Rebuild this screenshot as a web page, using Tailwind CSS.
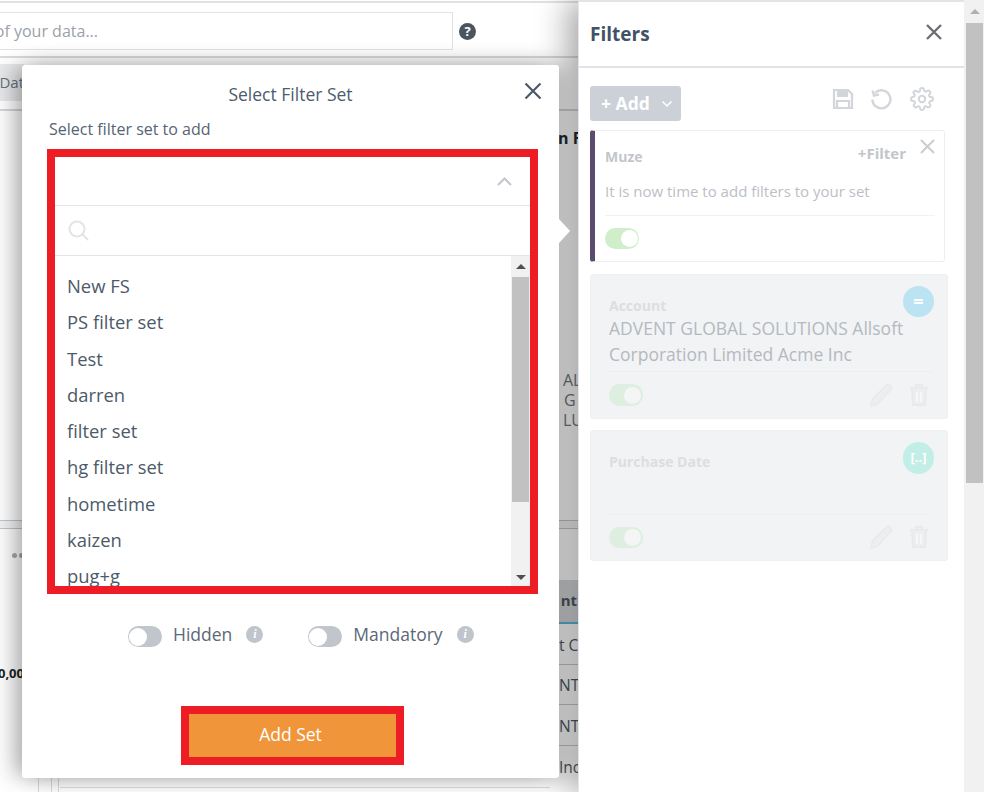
<!DOCTYPE html>
<html lang="en">
<head>
    <meta charset="UTF-8">
    <title>Select Filter Set</title>
    <script src="https://cdn.jsdelivr.net/npm/@tailwindcss/browser@4"></script>
</head>
<body class="bg-white">
<div class="relative w-[984px] h-[792px] overflow-hidden flex font-['Open_Sans',sans-serif] text-[#4a5a6c]">

    <!-- Page behind the modal -->
    <div class="relative w-[578px] shrink-0 flex flex-col pt-[1px]">
        <div class="h-[57px] shrink-0 border-t-2 border-b-2 border-t-[#dfe1e4] border-b-[#d8dadd] flex items-start">
            <div class="w-[453px] h-[38px] mt-[9px] border border-l-0 border-[#e0e2e5] flex items-center text-[16px] text-[#9aa1a9] whitespace-nowrap overflow-hidden justify-end pr-[354px]">of your data...</div>
            <div class="w-[17px] h-[17px] mt-[20px] ml-[6px] rounded-full bg-[#4a5560] text-white text-[13px] font-bold flex items-center justify-center">?</div>
        </div>
        <div class="h-[53px] shrink-0 border-b-2 border-[#d4d6d9] pt-[6px]">
            <div class="w-[24px] h-[37px] bg-[#e8e9eb] overflow-hidden flex items-center justify-end text-[15px] text-[#68727d] whitespace-nowrap">Dat</div>
        </div>
        <div class="flex justify-end h-[409px] shrink-0 pt-[16px] text-[16px] font-bold text-[#222b33] leading-[22px] overflow-hidden whitespace-nowrap">
            <div class="w-[20px]">
                <div>n F</div>
                <div class="mt-[221px] text-[16px] leading-[20px] font-normal text-[#73787d] pl-[5px]">
                    <div>AL</div>
                    <div class="pl-[1px]">G</div>
                    <div>LU</div>
                </div>
            </div>
        </div>
        <div class="h-[60px] shrink-0">
            <div class="h-[9px] bg-[#f3f4f5] border-y border-[#c4c6c9]"></div>
            <span class="ml-[12px] mt-[24px] w-[12px] h-[5px] flex gap-[2px]"><i class="w-[5px] h-[5px] rounded-full bg-[#a6abb1]"></i><i class="w-[5px] h-[5px] rounded-full bg-[#a6abb1]"></i></span>
        </div>
        <div class="flex-1 flex justify-between overflow-hidden">
            <div class="pt-[84px] text-[13px] font-bold text-[#222] w-[24px] whitespace-nowrap overflow-hidden flex justify-end">0,00</div>
            <div class="w-[19px] text-[15.5px] text-[#4f5964] whitespace-nowrap overflow-hidden">
                <div class="h-[44px] bg-[#d5d7da] border-b-2 border-[#5db8d8] flex items-center font-bold text-[15px] justify-end pr-[1px] pb-[2px]">nt</div>
                <div class="h-[41px] border-b border-[#c8cacd] flex items-center pt-[3px]">t C</div>
                <div class="h-[40px] border-b border-[#c8cacd] flex items-center pt-[3px]">NT</div>
                <div class="h-[41px] border-b border-[#c8cacd] flex items-center pt-[3px]">NT</div>
                <div class="h-[40px] flex items-center pt-[3px]">Inc</div>
            </div>
        </div>
        <!-- bits of the page showing under the modal -->
        <div class="absolute left-[38px] top-[778px] w-[21px] h-[14px] border-x border-[#d8dadd]"><div class="ml-[12px] w-[1px] h-full bg-[#d8dadd]"></div></div>
        <div class="absolute left-[60px] top-[787px] w-[490px] h-[1px] bg-[#dcdee1]"></div>
    </div>

    <!-- Filters panel -->
    <div class="relative z-10 w-[386px] shrink-0 bg-white shadow-[-10px_0_30px_rgba(0,0,0,0.35)] flex flex-col border-t-2 border-l border-t-[#e2e4e6] border-l-[#e4e4ea] h-[792px]">
        <div class="h-[66px] shrink-0 border-b-2 border-[#e1e3e6] flex items-start justify-between pl-[11px] pr-[20px]">
            <h2 class="mt-[18px] text-[19px] leading-[28px] font-bold text-[#3f5268]">Filters</h2>
            <svg class="mt-[20px]" width="20" height="20" viewBox="0 0 20 20" fill="none" stroke="#6b6f74" stroke-width="2.4"><path d="M3 3l14 14M17 3L3 17"/></svg>
        </div>
        <div class="flex items-start justify-between pl-[11px] pr-[30px] pt-[18px]">
            <div class="w-[91px] h-[35px] rounded-[3px] bg-[#ccd1d8] text-white font-bold text-[17.5px] flex items-center pl-[11px] gap-[11px]">
                <span>+ Add</span>
                <svg width="12" height="8" viewBox="0 0 12 8" fill="none" stroke="#fff" stroke-width="1.5"><path d="M1.5 1.5L6 6l4.5-4.5"/></svg>
            </div>
            <div class="flex items-center mt-[1px] text-[#d2d6db]">
                <svg width="22" height="22" viewBox="0 0 22 22" fill="none" stroke="currentColor" stroke-width="2.2"><path d="M2 2h14l4 4v14H2z"/><path d="M6 2h9v6H6z" fill="currentColor"/><path d="M5 20v-7h12v7"/></svg>
                <svg class="ml-[16px]" width="22" height="22" viewBox="0 0 22 22" fill="none" stroke="currentColor" stroke-width="2.4"><path d="M5 5a9 9 0 1 1-2.600 6.500"/><path d="M2.500 2.500L4 7.500l5-1"/></svg>
                <svg class="ml-[18px]" width="24" height="24" viewBox="0 0 24 24" fill="none" stroke="currentColor" stroke-width="2"><circle cx="12" cy="12" r="3.200"/><path d="M19.400 15a1.650 1.650 0 0 0 .33 1.820l.06.06a2 2 0 1 1-2.830 2.830l-.06-.06a1.650 1.650 0 0 0-2.820 1.170V21a2 2 0 1 1-4 0v-.09a1.650 1.650 0 0 0-2.820-1.170l-.06.06a2 2 0 1 1-2.830-2.830l.06-.06A1.650 1.650 0 0 0 3.090 14H3a2 2 0 1 1 0-4h.09a1.650 1.650 0 0 0 1.170-2.820l-.06-.06a2 2 0 1 1 2.830-2.830l.06.06A1.650 1.650 0 0 0 10 3.090V3a2 2 0 1 1 4 0v.09a1.650 1.650 0 0 0 2.820 1.170l.06-.06a2 2 0 1 1 2.830 2.830l-.06.06A1.650 1.650 0 0 0 20.910 10H21a2 2 0 1 1 0 4h-.09a1.650 1.650 0 0 0-1.510 1z"/></svg>
            </div>
        </div>

        <div class="flex flex-col pl-[11px] mt-[9px]">
            <!-- Muze set -->
            <div class="relative w-[355px] h-[132px] border border-[#eceef0] border-l-[5px] border-l-[#5b4b6f] rounded-[3px] pl-[10px] pr-[9px]">
                <div class="flex justify-between items-start">
                    <span class="mt-[15px] text-[14px] font-bold text-[#c2c6cb]">Muze</span>
                    <span class="mt-[11px] mr-[29px] text-[15px] font-bold text-[#c2c6cb]">+Filter</span>
                </div>
                <svg class="absolute right-[9px] top-[8px]" width="15" height="15" viewBox="0 0 15 15" fill="none" stroke="#c9cdd2" stroke-width="2"><path d="M1 1l13 13M14 1L1 14"/></svg>
                <p class="mt-[13px] h-[36px] text-[15px] text-[#bcc0c6] border-b border-[#f1f2f4]">It is now time to add filters to your set</p>
                <div class="mt-[12px] w-[34px] h-[21px] rounded-full bg-[#cfeec9] flex justify-end items-center pr-[1px]"><div class="w-[17px] h-[17px] rounded-full bg-white"></div></div>
            </div>

            <!-- Account filter -->
            <div class="relative w-[358px] h-[145px] mt-[12px] bg-[#f1f3f5] border border-[#eef0f2] rounded-[3px] pl-[18px] pr-[18px]">
                <div class="absolute right-[13px] top-[11px] w-[31px] h-[31px] rounded-full bg-[#bce3f2] text-white font-bold text-[18px] flex items-center justify-center">=</div>
                <div class="pt-[21px] text-[14px] leading-[19px] font-bold text-[#dcdee1]">Account</div>
                <p class="text-[17.5px] leading-[25.5px] text-[#b5b9bf] mt-[1px] h-[56px] border-b border-[#eceef0] -mr-[3px]">ADVENT GLOBAL SOLUTIONS Allsoft Corporation Limited Acme Inc</p>
                <div class="flex justify-between items-center mt-[11px]">
                    <div class="w-[34px] h-[22px] rounded-full bg-[#deeee0] flex justify-end items-center pr-[2px]"><div class="w-[17px] h-[17px] rounded-full bg-[#f4f6f6]"></div></div>
                    <div class="flex items-center gap-[16px]">
                        <svg width="24" height="24" viewBox="0 0 24 24" fill="#eceef0" stroke="#e8eaec" stroke-width="1.600"><path d="M2 23l1.500-7L17 2.500a2.500 2.500 0 0 1 4.500 4.500L8.500 21z"/></svg>
                        <svg width="20" height="22" viewBox="0 0 20 22" fill="#eceef0" stroke="#e8eaec" stroke-width="2"><path d="M1 4h18M7 4V1h6v3M3 4l1 17h12l1-17z"/><path d="M8 8v10M12 8v10" stroke="#f6f7f8"/></svg>
                    </div>
                </div>
            </div>

            <!-- Purchase Date filter -->
            <div class="relative w-[358px] h-[131px] mt-[11px] bg-[#f1f3f5] border border-[#eef0f2] rounded-[3px] pl-[18px] pr-[18px]">
                <div class="absolute right-[13px] top-[11px] w-[31px] h-[32px] rounded-full bg-[#c3eee8] text-white font-bold text-[13px] flex items-center justify-center">[..]</div>
                <div class="pt-[21px] h-[84px] text-[14px] leading-[19px] font-bold text-[#dcdee1] border-b border-[#eceef0]">Purchase Date</div>
                <div class="flex justify-between items-center mt-[10px]">
                    <div class="w-[34px] h-[21px] rounded-full bg-[#deeee0] flex justify-end items-center pr-[2px]"><div class="w-[17px] h-[17px] rounded-full bg-[#f4f6f6]"></div></div>
                    <div class="flex items-center gap-[16px]">
                        <svg width="24" height="24" viewBox="0 0 24 24" fill="#eceef0" stroke="#e8eaec" stroke-width="1.600"><path d="M2 23l1.500-7L17 2.500a2.500 2.500 0 0 1 4.500 4.500L8.500 21z"/></svg>
                        <svg width="20" height="22" viewBox="0 0 20 22" fill="#eceef0" stroke="#e8eaec" stroke-width="2"><path d="M1 4h18M7 4V1h6v3M3 4l1 17h12l1-17z"/><path d="M8 8v10M12 8v10" stroke="#f6f7f8"/></svg>
                    </div>
                </div>
            </div>
        </div>
    </div>

    <!-- Window scrollbar -->
    <div class="relative z-20 w-[20px] shrink-0 bg-[#f1f1f1] pl-[2px] pr-[1px]">
        <div class="h-[23px] flex items-center justify-center"><div class="w-0 h-0 border-x-[5px] border-x-transparent border-b-[5px] border-b-[#b0b0b0]"></div></div>
        <div class="h-[460px] bg-[#c1c1c1]"></div>
    </div>

    <!-- Select Filter Set modal -->
    <div class="absolute z-30 left-[22px] top-[65px] w-[537px] h-[713px] bg-white rounded-[3px] shadow-[-10px_0_22px_-2px_rgba(0,0,0,0.3),10px_0_22px_rgba(0,0,0,0.18)] [clip-path:inset(-30px_-19px_-30px_-30px)]">
        <div class="absolute right-[-11px] top-[154px] w-0 h-0 border-y-[12px] border-y-transparent border-l-[11px] border-l-white"></div>
        <svg class="absolute right-[17px] top-[17px]" width="18" height="18" viewBox="0 0 18 18" fill="none" stroke="#4b5a6b" stroke-width="2.200"><path d="M1.500 1.500l15 15M16.500 1.500l-15 15"/></svg>
        <h3 class="pt-[17px] text-center text-[17.5px] leading-[24px] text-[#4d5c6d]">Select Filter Set</h3>
        <p class="ml-[27px] mt-[12px] text-[16px] leading-[22px] text-[#566475]">Select filter set to add</p>

        <div class="ml-[25px] mt-[9px] w-[491px] h-[445px] border-[8px] border-[#ee1c25] flex flex-col">
            <div class="h-[49px] shrink-0 border-b border-[#e2e4e7] flex items-center justify-end pr-[18px]">
                <svg width="15" height="9" viewBox="0 0 15 9" fill="none" stroke="#c3c7cc" stroke-width="2"><path d="M1 8l6.500-6.500L14 8"/></svg>
            </div>
            <div class="h-[50px] shrink-0 border-b border-[#e2e4e7] flex items-center pl-[13px]">
                <svg width="21" height="21" viewBox="0 0 21 21" fill="none" stroke="#e3e4e6" stroke-width="2"><circle cx="9" cy="9" r="7.500"/><path d="M14.500 14.500L20 20"/></svg>
            </div>
            <div class="flex-1 flex overflow-hidden">
                <ul class="flex-1 pl-[12px] pt-[12px] text-[18.4px] leading-[36.250px] text-[#4c5a69]">
                    <li>New FS</li>
                    <li>PS filter set</li>
                    <li>Test</li>
                    <li>darren</li>
                    <li>filter set</li>
                    <li>hg filter set</li>
                    <li>hometime</li>
                    <li>kaizen</li>
                    <li>pug+g</li>
                </ul>
                <div class="w-[19px] shrink-0 bg-[#f1f1f1] flex flex-col items-center">
                    <div class="h-[21px] shrink-0 flex items-center justify-center"><div class="w-0 h-0 border-x-[5px] border-x-transparent border-b-[5px] border-b-[#505050]"></div></div>
                    <div class="w-[17px] h-[225px] bg-[#c1c1c1]"></div>
                    <div class="flex-1 flex items-end pb-[6px]"><div class="w-0 h-0 border-x-[5px] border-x-transparent border-t-[5px] border-t-[#505050]"></div></div>
                </div>
            </div>
        </div>

        <div class="flex items-center mt-[32px] ml-[106px] h-[21px] text-[17.5px] text-[#5b6877]">
            <div class="w-[34px] h-[21px] rounded-full bg-[#c1c6cc] flex items-center pl-[1px]"><div class="w-[18px] h-[18px] rounded-full bg-white"></div></div>
            <span class="ml-[11px] -mt-[4px]">Hidden</span>
            <div class="ml-[14px] -mt-[5px] w-[17px] h-[17px] rounded-full bg-[#bfc5cc] text-white text-[12px] font-bold italic font-['Liberation_Serif',serif] flex items-center justify-center">i</div>
            <div class="ml-[45px] w-[34px] h-[21px] rounded-full bg-[#c1c6cc] flex items-center pl-[1px]"><div class="w-[18px] h-[18px] rounded-full bg-white"></div></div>
            <span class="ml-[11px] -mt-[4px]">Mandatory</span>
            <div class="ml-[14px] -mt-[5px] w-[17px] h-[17px] rounded-full bg-[#bfc5cc] text-white text-[12px] font-bold italic font-['Liberation_Serif',serif] flex items-center justify-center">i</div>
        </div>

        <div class="ml-[159px] mt-[59px] w-[223px] h-[59px] border-[8px] border-[#ee1c25]">
            <div class="h-full bg-[#f0953a] text-white text-[17.5px] flex items-center justify-center pr-[4px] pb-[2px]">Add Set</div>
        </div>
    </div>
</div>
</body>
</html>
